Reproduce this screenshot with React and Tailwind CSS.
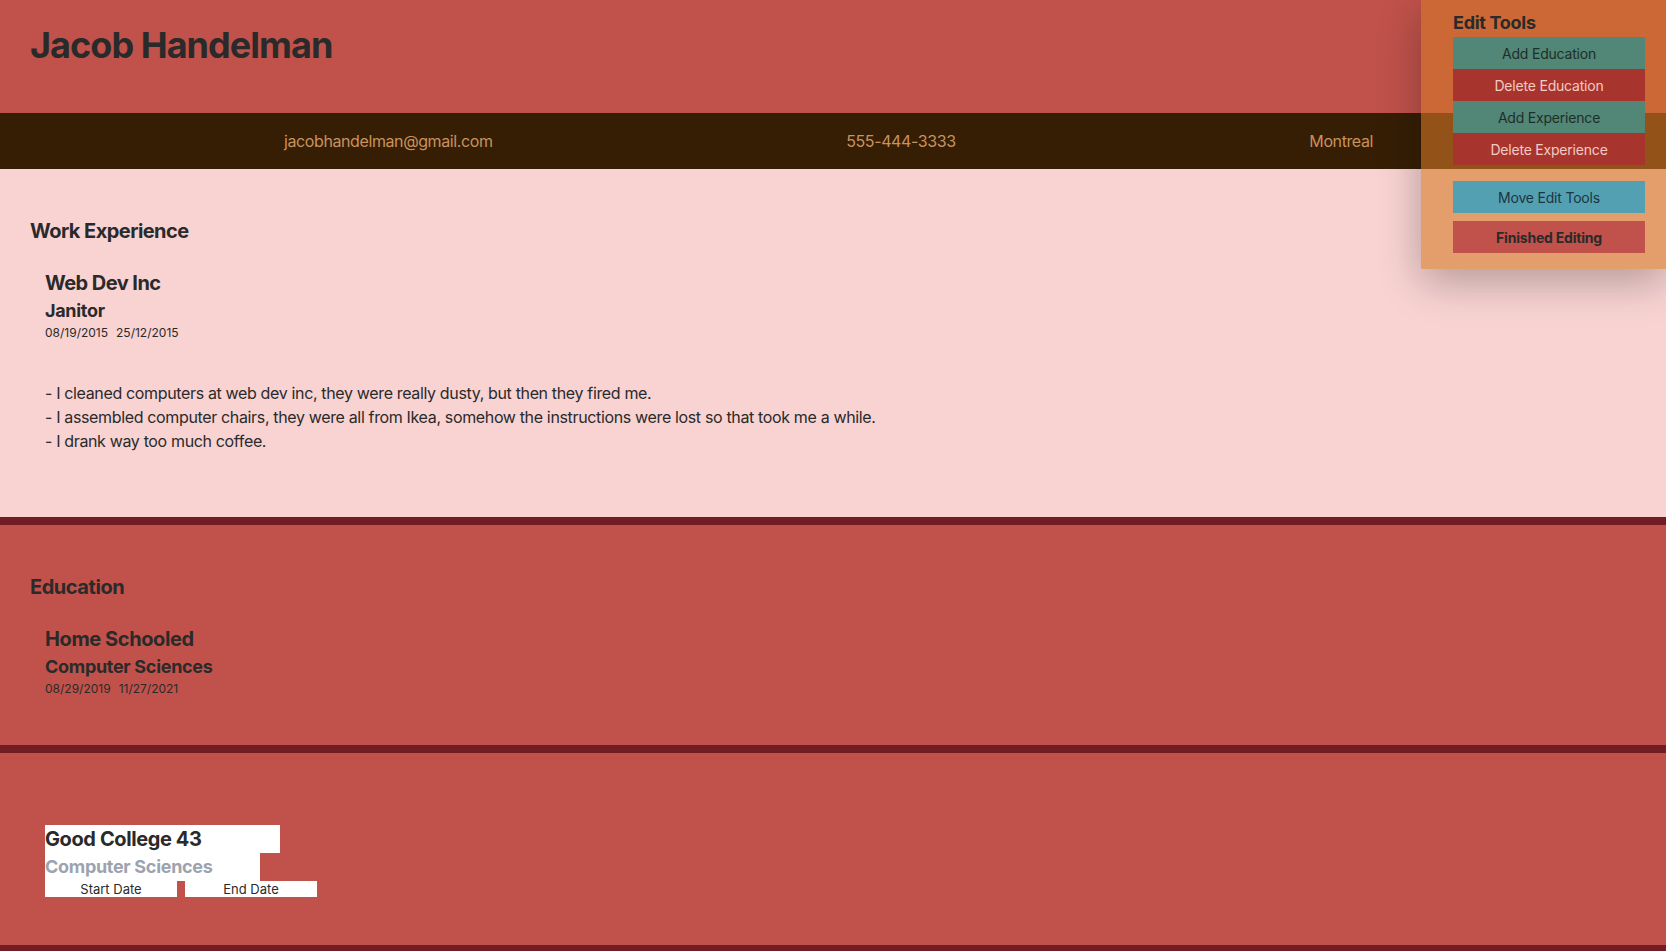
import React from "react";

const bullets =
  "\n- I cleaned computers at web dev inc, they were really dusty, but then they fired me.\n- I assembled computer chairs, they were all from Ikea, somehow the instructions were lost so that took me a while.\n- I drank way too much coffee.";

export default function App() {
  return (
    <div
      className="relative min-h-screen text-[#2a2a2a]"
      style={{ fontFamily: "Inter, 'Noto Sans', sans-serif" }}
    >
      <header className="h-[113px] bg-[#c0524b] pl-[30px] pt-[25px]">
        <h1 className="text-4xl leading-10 font-bold tracking-[-0.95px]">Jacob Handelman</h1>
      </header>

      <div className="flex h-[56px] items-center justify-between bg-[#361e05] pl-[284px] pr-[293px] text-base leading-6 tracking-[-0.4px] text-[#c8925e]">
        <span>jacobhandelman@gmail.com</span>
        <span>555-444-3333</span>
        <span>Montreal</span>
      </div>

      <section className="border-b-8 border-[#721c24] bg-[#f8d3d2] py-12 pl-[30px]">
        <h2 className="text-xl leading-7 font-bold tracking-[-0.55px]">Work Experience</h2>
        <div className="mt-6 pl-[15px]">
          <h3 className="text-xl leading-7 font-bold tracking-[-0.55px]">Web Dev Inc</h3>
          <h4 className="text-lg leading-7 font-bold tracking-[-0.3px]">Janitor</h4>
          <div className="flex gap-2 text-xs leading-4">
            <span>08/19/2015</span>
            <span>25/12/2015</span>
          </div>
          <p className="my-4 whitespace-pre-wrap text-base leading-6 tracking-[-0.35px]">{bullets}</p>
        </div>
      </section>

      <section className="border-b-8 border-[#721c24] bg-[#c0524b] py-12 pl-[30px]">
        <h2 className="text-xl leading-7 font-bold tracking-[-0.45px]">Education</h2>
        <div className="mt-6 pl-[15px]">
          <h3 className="text-xl leading-7 font-bold tracking-[-0.4px]">Home Schooled</h3>
          <h4 className="text-lg leading-7 font-bold tracking-[-0.3px]">Computer Sciences</h4>
          <div className="flex gap-2 text-xs leading-4">
            <span>08/29/2019</span>
            <span>11/27/2021</span>
          </div>
        </div>
      </section>

      <section className="border-b-8 border-[#721c24] bg-[#c0524b] py-12 pl-[30px]">
        <h2 className="h-0"></h2>
        <div className="mt-6 flex flex-col items-start pl-[15px]">
          <div className="h-7 w-[235px] bg-white text-xl leading-7 font-bold tracking-[-0.4px]">Good College 43</div>
          <div className="h-7 w-[215px] bg-white text-lg leading-7 font-bold tracking-[-0.3px] text-[#9ca3af]">
            Computer Sciences
          </div>
          <div className="flex gap-2">
            <div className="h-4 w-[132px] bg-white text-center text-[13px] leading-4">Start Date</div>
            <div className="h-4 w-[132px] bg-white text-center text-[13px] leading-4">End Date</div>
          </div>
        </div>
      </section>

      <div className="absolute right-0 top-0 w-[245px] bg-[rgba(213,121,37,0.59)] pb-4 pl-8 pr-[21px] pt-[9px] shadow-[0_12px_40px_rgba(0,0,0,0.28)]">
        <h2 className="text-lg leading-7 font-bold tracking-[-0.3px]">Edit Tools</h2>
        <div className="flex flex-col text-sm tracking-[-0.2px]">
          <button className="h-8 w-full bg-[#528676] pt-px text-[#1e2e29]">Add Education</button>
          <button className="h-8 w-full bg-[#a8352d] pt-px text-[#f5c9c4]">Delete Education</button>
          <button className="h-8 w-full bg-[#528676] pt-px text-[#1e2e29]">Add Experience</button>
          <button className="h-8 w-full bg-[#a8352d] pt-px text-[#f5c9c4]">Delete Experience</button>
          <button className="mt-4 h-8 w-full bg-[#53a0b3] pt-px text-[#1c3540]">Move Edit Tools</button>
          <button className="mt-2 h-8 w-full bg-[#c0524b] pt-px font-bold text-[#2a2a2a]">Finished Editing</button>
        </div>
      </div>
    </div>
  );
}
